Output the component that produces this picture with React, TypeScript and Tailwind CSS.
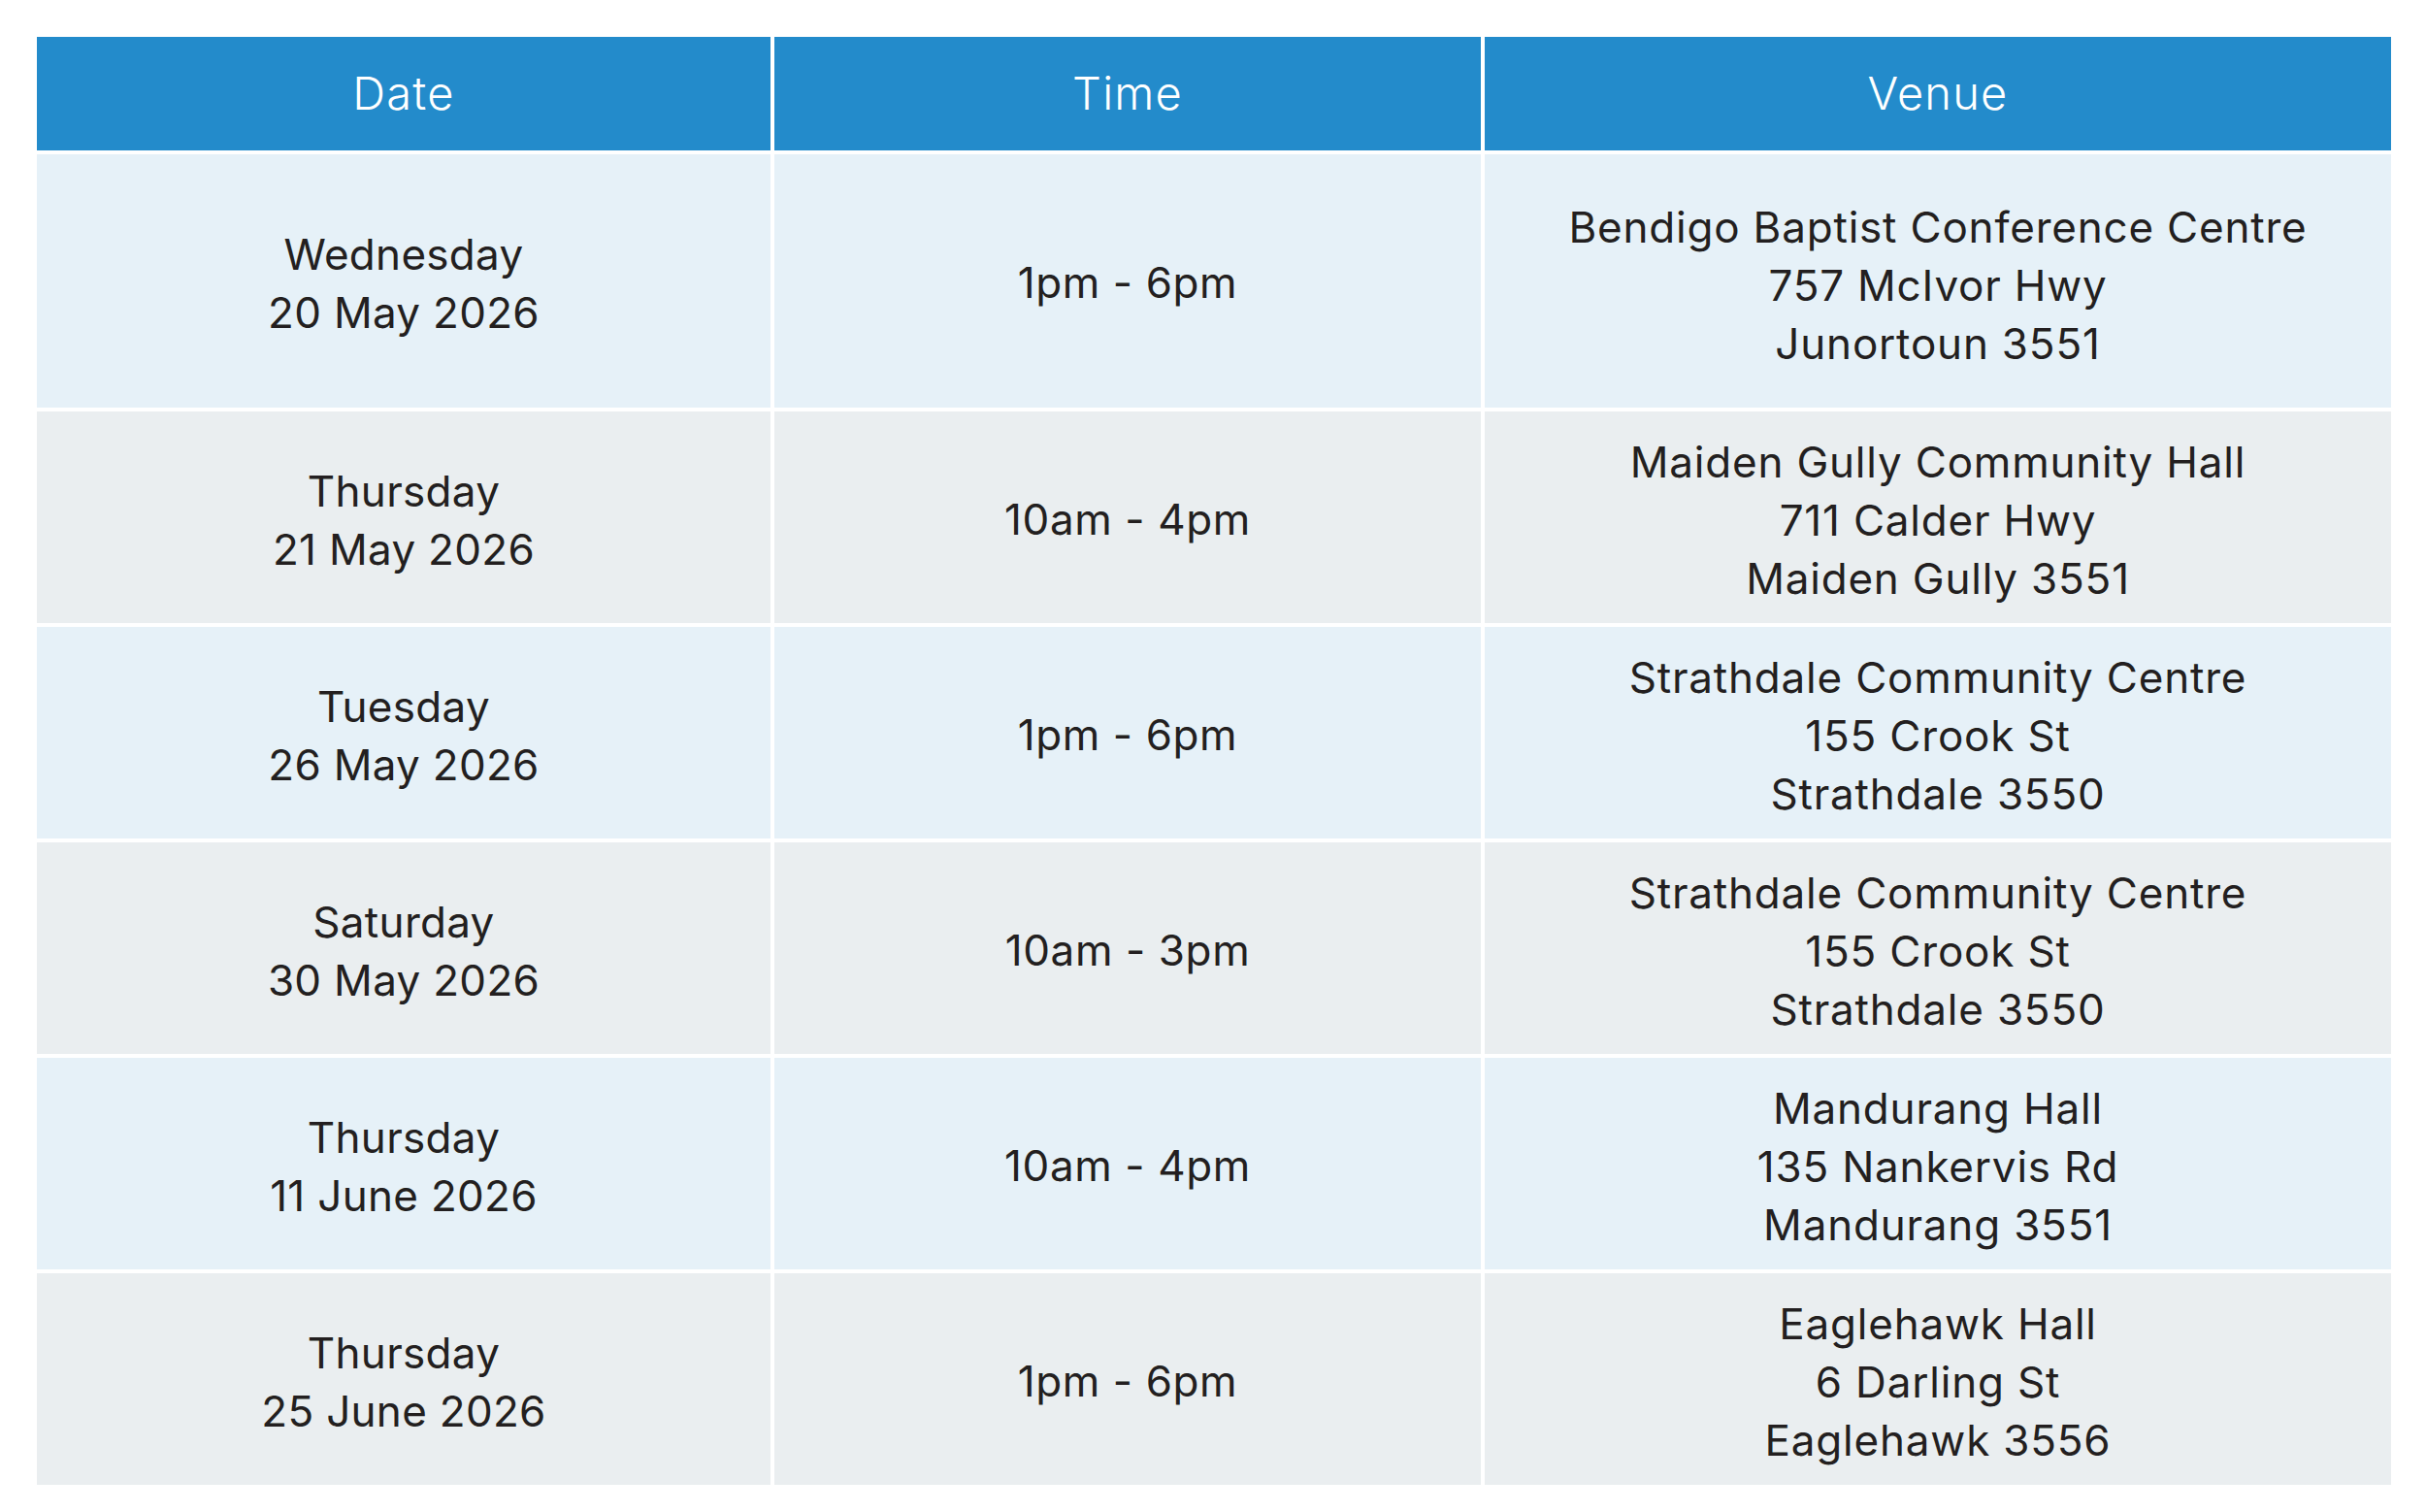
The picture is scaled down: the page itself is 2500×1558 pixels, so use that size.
const rows = [
  { day: "Wednesday", date: "20 May 2026", time: "1pm - 6pm", venue: ["Bendigo Baptist Conference Centre", "757 McIvor Hwy", "Junortoun 3551"] },
  { day: "Thursday", date: "21 May 2026", time: "10am - 4pm", venue: ["Maiden Gully Community Hall", "711 Calder Hwy", "Maiden Gully 3551"] },
  { day: "Tuesday", date: "26 May 2026", time: "1pm - 6pm", venue: ["Strathdale Community Centre", "155 Crook St", "Strathdale 3550"] },
  { day: "Saturday", date: "30 May 2026", time: "10am - 3pm", venue: ["Strathdale Community Centre", "155 Crook St", "Strathdale 3550"] },
  { day: "Thursday", date: "11 June 2026", time: "10am - 4pm", venue: ["Mandurang Hall", "135 Nankervis Rd", "Mandurang 3551"] },
  { day: "Thursday", date: "25 June 2026", time: "1pm - 6pm", venue: ["Eaglehawk Hall", "6 Darling St", "Eaglehawk 3556"] },
];

export default function App() {
  return (
    <div className="min-h-[1558px] w-[2500px] bg-white pl-[38px] pt-[38px] font-['Inter',sans-serif] text-[#231f20]">
      <div className="grid w-[2426px] grid-cols-[756px_728px_934px] gap-[4px]">
        {["Date", "Time", "Venue"].map((h) => (
          <div key={h} className="flex h-[117px] items-center justify-center bg-[#238bcb] text-[47px] font-light tracking-[1.2px] text-white">
            {h}
          </div>
        ))}
        {rows.map((r, i) => {
          const bg = i % 2 === 0 ? "bg-[#e6f1f8]" : "bg-[#eaeef0]";
          const h = i === 0 ? "h-[261px]" : "h-[218px]";
          return (
            <div key={i} className="contents">
              <div className={`${bg} ${h} flex flex-col items-center justify-center pt-[5px] text-[44px] leading-[60px] tracking-[0.3px]`}>
                <span>{r.day}</span>
                <span>{r.date}</span>
              </div>
              <div className={`${bg} ${h} flex items-center justify-center pt-[3px] text-[44px] leading-[60px] tracking-[0.6px]`}>{r.time}</div>
              <div className={`${bg} ${h} flex flex-col items-center justify-center ${i === 0 ? "pt-[8px]" : "pt-[5px]"} text-[44px] leading-[60px] tracking-[0.8px]`}>
                {r.venue.map((v) => (
                  <span key={v}>{v}</span>
                ))}
              </div>
            </div>
          );
        })}
      </div>
    </div>
  );
}
